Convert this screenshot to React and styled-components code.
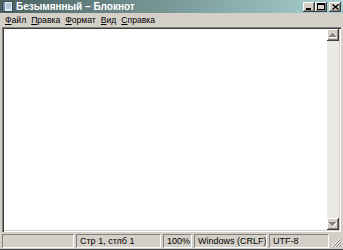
import React from 'react';
import styled, { createGlobalStyle } from 'styled-components';

const Global = createGlobalStyle`
  html, body { margin: 0; padding: 0; background: #d4d0c8; }
  body { font-family: "Liberation Sans", Arial, sans-serif; }
`;

const Window = styled.div`
  width: 343px;
  height: 250px;
  box-sizing: border-box;
  background: #d4d0c8;
  display: flex;
  flex-direction: column;
  overflow: hidden;
  border-bottom: 1px solid #404040;
`;

const TitleBar = styled.div`
  height: 13px;
  flex: none;
  display: flex;
  align-items: center;
  padding: 0 2px;
  background: linear-gradient(to right, #4a6262, #a9d1d1);
`;

const TitleIcon = styled.svg`
  width: 11px;
  height: 11px;
  flex: none;
  margin-right: 3px;
`;

const TitleText = styled.div`
  flex: 1;
  color: #fff;
  font-weight: bold;
  font-size: 10px;
  line-height: 13px;
  white-space: nowrap;
`;

const CaptionButtons = styled.div`
  display: flex;
  align-items: center;
`;

const CaptionButton = styled.div`
  width: 12px;
  height: 10px;
  box-sizing: border-box;
  background: #d4d0c8;
  box-shadow: inset -1px -1px #404040, inset 1px 1px #fff, inset -2px -2px #808080;
  margin-left: ${(p) => (p.$gap ? '2px' : '0')};
  display: flex;
  align-items: center;
  justify-content: center;
  svg { display: block; }
`;

const MenuBar = styled.div`
  height: 14px;
  flex: none;
  display: flex;
  align-items: center;
  padding: 0 2px;
`;

const MenuItem = styled.div`
  font-size: 8.6px;
  line-height: 14px;
  padding: 0 2px 0 3px;
  color: #000;
  u { text-decoration: underline; text-underline-offset: 1px; }
`;

const EditArea = styled.div`
  flex: 1;
  margin: 0 2px 0 2px;
  display: flex;
  box-shadow: inset 1px 1px #808080, inset 2px 2px #404040, inset -1px -1px #fff, inset -2px -2px #d4d0c8;
  padding: 2px;
  min-height: 0;
`;

const TextSurface = styled.div`
  flex: 1;
  background: #fff;
`;

const ScrollBar = styled.div`
  width: 12px;
  flex: none;
  display: flex;
  flex-direction: column;
  justify-content: space-between;
  background: #ebe9e4;
`;

const ScrollButton = styled.div`
  width: 12px;
  height: 12px;
  box-sizing: border-box;
  background: #d4d0c8;
  box-shadow: inset -1px -1px #404040, inset 1px 1px #fff, inset -2px -2px #808080;
  display: flex;
  align-items: center;
  justify-content: center;
`;

const StatusBar = styled.div`
  height: 16px;
  flex: none;
  display: flex;
  align-items: stretch;
  gap: 2px;
  padding: 1px 2px 1px 2px;
  box-sizing: border-box;
  margin-top: 1px;
`;

const Panel = styled.div`
  width: ${(p) => p.$w}px;
  flex: ${(p) => (p.$grow ? 1 : 'none')};
  box-sizing: border-box;
  border-top: 1px solid #808080;
  border-left: 1px solid #808080;
  border-bottom: 1px solid #fff;
  border-right: 1px solid #fff;
  font-size: 9px;
  line-height: 12px;
  padding-left: 3px;
  color: #000;
  white-space: nowrap;
  overflow: hidden;
`;

const Grip = styled.svg`
  width: 10px;
  height: 12px;
  flex: none;
  align-self: flex-end;
`;

const Arrow = ({ up }) => (
  <svg width="8" height="5" viewBox="0 0 8 5">
    {up ? (
      <>
        <path d="M4 1h1v1h1v1h1v1h1v1H1V4h1V3h1V2h1z" fill="#fff" />
        <path d="M3 0h1v1h1v1h1v1h1v1H0V3h1V2h1V1h1z" fill="#808080" />
      </>
    ) : (
      <>
        <path d="M1 1h7v1H7v1H6v1H5v1H4V4H3V3H2V2H1z" fill="#fff" />
        <path d="M0 0h7v1H6v1H5v1H4v1H3V3H2V2H1V1H0z" fill="#808080" />
      </>
    )}
  </svg>
);

const menus = [
  ['Ф', 'айл'],
  ['П', 'равка'],
  ['Ф', 'ормат'],
  ['В', 'ид'],
  ['С', 'правка'],
];

export default function App() {
  return (
    <>
      <Global />
      <Window>
        <TitleBar>
          <TitleIcon viewBox="0 0 11 11">
            <rect x="0.5" y="0.5" width="10" height="10" fill="#dfeefa" stroke="#404848" />
            <rect x="1" y="1" width="2" height="9" fill="#6a8aa8" />
            <path d="M4 3h5M4 5h5M4 7h5" stroke="#8aa0b8" strokeWidth="1" />
          </TitleIcon>
          <TitleText>Безымянный – Блокнот</TitleText>
          <CaptionButtons>
            <CaptionButton>
              <svg width="6" height="6" viewBox="0 0 6 6">
                <rect x="0" y="4" width="5" height="2" fill="#000" />
              </svg>
            </CaptionButton>
            <CaptionButton>
              <svg width="8" height="7" viewBox="0 0 8 7">
                <path d="M0 0h8v7H0z M1 2v4h6V2z" fill="#000" fillRule="evenodd" />
              </svg>
            </CaptionButton>
            <CaptionButton $gap>
              <svg width="7" height="6" viewBox="0 0 7 6">
                <path d="M0.5 0.5l6 5M6.5 0.5l-6 5" stroke="#000" strokeWidth="1.4" />
              </svg>
            </CaptionButton>
          </CaptionButtons>
        </TitleBar>
        <MenuBar>
          {menus.map(([a, b], i) => (
            <MenuItem key={i}>
              <u>{a}</u>
              {b}
            </MenuItem>
          ))}
        </MenuBar>
        <EditArea>
          <TextSurface />
          <ScrollBar>
            <ScrollButton>
              <Arrow up />
            </ScrollButton>
            <ScrollButton>
              <Arrow />
            </ScrollButton>
          </ScrollBar>
        </EditArea>
        <StatusBar>
          <Panel $w={72} />
          <Panel $w={85}>Стр 1, стлб 1</Panel>
          <Panel $w={29}>100%</Panel>
          <Panel $w={73}>Windows (CRLF)</Panel>
          <Panel $grow>UTF-8</Panel>
          <Grip viewBox="0 0 10 12">
            <path d="M9 3L1 11M9 6L4 11M9 9L7 11" stroke="#fff" strokeWidth="1" />
            <path d="M10 3L2 11M10 6L5 11M10 9L8 11" stroke="#808080" strokeWidth="1" />
          </Grip>
        </StatusBar>
      </Window>
    </>
  );
}
